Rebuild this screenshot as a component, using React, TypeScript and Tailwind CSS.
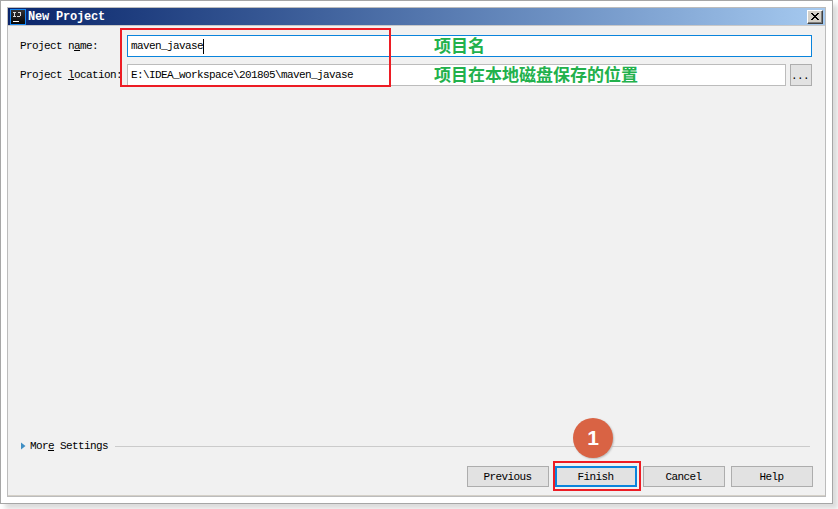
import type { ReactNode } from 'react';

const mono =
  "font-['Liberation_Mono','Noto_Sans_CJK_SC',monospace] text-[11px] leading-[14px] tracking-[-0.6px] whitespace-pre text-black";

function Mnemonic({ children }: { children: ReactNode }) {
  return <span className="underline underline-offset-1">{children}</span>;
}

function DialogButton({ label, primary = false }: { label: string; primary?: boolean }) {
  return (
    <button
      className={`flex h-[21px] w-[82px] items-center justify-center bg-[#e2e2e2] pr-[1px] ${mono} ${
        primary ? 'border-2 border-[#0a84dc]' : 'border border-[#adadad]'
      }`}
    >
      {label}
    </button>
  );
}

function TitleBar() {
  return (
    <div className="flex h-[18px] items-center border-b border-[#c8c8c8] bg-linear-to-r from-[#0a246a] to-[#a6caf0]">
      <svg className="ml-[2px] shrink-0" width="16" height="16" viewBox="0 0 16 16">
        <defs>
          <linearGradient id="ij" x1="0" y1="0" x2="0" y2="1">
            <stop offset="0" stopColor="#333333" />
            <stop offset="1" stopColor="#050505" />
          </linearGradient>
        </defs>
        <rect x="0.5" y="0.5" width="15" height="15" fill="url(#ij)" stroke="#1686f2" />
        <path d="M3 3.5h3M4.5 3v5M3 7.5h3M8 3.5h3M10.5 3v4M7 7.5h3" fill="none" stroke="#d8d8d8" strokeWidth="1" />
        <path d="M3 12.5h6" stroke="#ffffff" strokeWidth="1" />
      </svg>
      <span className="ml-[2px] font-['Liberation_Mono',monospace] text-[12px] leading-[16px] font-bold tracking-[-0.2px] text-white">
        New Project
      </span>
      <button className="mr-[2px] ml-auto flex h-[14px] w-[16px] items-center justify-center border-t border-r border-b border-l border-t-white border-r-[#404040] border-b-[#404040] border-l-white bg-[#d4d0c8] shadow-[inset_-1px_-1px_0_#808080]">
        <svg width="8" height="7" viewBox="0 0 8 7" shapeRendering="crispEdges">
          <path
            d="M0 0h2v1H0zM6 0h2v1H6zM1 1h2v1H1zM5 1h2v1H5zM2 2h4v1H2zM3 3h2v1H3zM2 4h4v1H2zM1 5h2v1H1zM5 5h2v1H5zM0 6h2v1H0zM6 6h2v1H6z"
            fill="#000"
          />
        </svg>
      </button>
    </div>
  );
}

const note =
  "absolute left-[434px] font-['Noto_Sans_CJK_SC',sans-serif] text-[17px] leading-[20px] font-bold whitespace-nowrap text-[#22b14c]";

export default function App() {
  return (
    <div className="relative h-[509px] w-[838px] overflow-hidden bg-white">
      <div className="h-[504px] w-[833px] border border-[#a6a6a6] bg-white p-[6px] shadow-[5px_5px_5px_#dcdcdc]">
        <div className="flex h-[490px] w-[819px] flex-col border border-[#bcbcbc] bg-[#f1f1f1] shadow-[inset_0_-1px_0_#d4d0c8]">
          <TitleBar />
          <div className="flex flex-col gap-[7px] pt-[9px] pl-[12px]">
            <div className="flex h-[22px] items-center">
              <label className={`w-[107px] shrink-0 ${mono}`}>
                Project n<Mnemonic>a</Mnemonic>me:
              </label>
              <div className={`flex h-[22px] w-[685px] items-center border border-[#0a84dc] bg-white pl-[3px] ${mono}`}>
                maven_javase
                <span className="h-[15px] w-px bg-black" />
              </div>
            </div>
            <div className="flex h-[22px] items-center">
              <label className={`w-[107px] shrink-0 ${mono}`}>
                Project <Mnemonic>l</Mnemonic>ocation:
              </label>
              <div className={`flex h-[22px] w-[659px] items-center border border-[#bcbcbc] bg-white pl-[3px] ${mono}`}>
                E:\IDEA_workspace\201805\maven_javase
              </div>
              <button
                className={`ml-[4px] flex h-[22px] w-[22px] items-center justify-center border border-[#adadad] bg-[#e2e2e2] pt-[2px] pr-[2px] ${mono}`}
              >
                ...
              </button>
            </div>
          </div>
          <div className="mt-auto flex h-[14px] items-center pl-[13px]">
            <svg width="5" height="8" viewBox="0 0 5 8">
              <path d="M0 0.5L4.5 4L0 7.5z" fill="#3f8fc4" />
            </svg>
            <span className={`ml-[4px] ${mono}`}>
              Mor<Mnemonic>e</Mnemonic> Settings
            </span>
            <div className="ml-[7px] h-px w-[695px] bg-[#cbcbcb]" />
          </div>
          <div className="mt-[13px] mb-[9px] flex gap-[6px] pl-[459px]">
            <DialogButton label="Previous" />
            <DialogButton label="Finish" primary />
            <DialogButton label="Cancel" />
            <DialogButton label="Help" />
          </div>
        </div>
      </div>

      <div className="absolute top-[28px] left-[120px] h-[59px] w-[271px] border-2 border-[#ed1c24]" />
      <div className={`top-[35px] ${note}`}>项目名</div>
      <div className={`top-[64px] ${note}`}>项目在本地磁盘保存的位置</div>
      <div className="absolute top-[461px] left-[553px] h-[30px] w-[88px] border-2 border-[#ed1c24]" />
      <div className="absolute top-[418px] left-[573px] flex h-[40px] w-[40px] items-center justify-center rounded-full bg-[#d96344] pb-[1px] font-['Liberation_Sans',sans-serif] text-[21px] leading-none font-bold text-white shadow-[1px_1px_2px_#bbbbbb]">
        1
      </div>
    </div>
  );
}
